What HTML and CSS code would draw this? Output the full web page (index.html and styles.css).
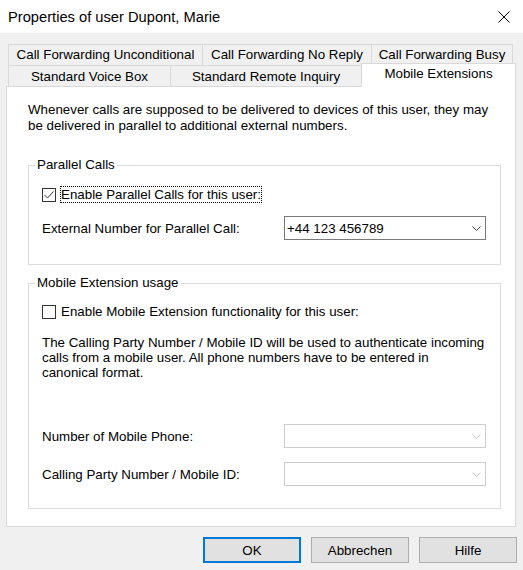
FILE: index.html
```html
<!DOCTYPE html>
<html lang="en">
<head>
    <meta charset="UTF-8">
    <meta name="viewport" content="width=device-width, initial-scale=1.0">
    <title>Properties of user Dupont, Marie</title>
    <link rel="stylesheet" href="styles.css">
</head>
<body>
    <div class="titlebar">
        <span class="title">Properties of user Dupont, Marie</span>
        <svg class="close" width="12" height="12" viewBox="0 0 12 12">
            <path d="M0.5 0.5 L11.5 11.5 M11.5 0.5 L0.5 11.5" stroke="#000" stroke-width="1" fill="none"/>
        </svg>
    </div>

    <div class="tabs">
        <div class="tab-row">
            <div class="tab tab-uncond">Call Forwarding Unconditional</div>
            <div class="tab tab-noreply">Call Forwarding No Reply</div>
            <div class="tab tab-busy">Call Forwarding Busy</div>
        </div>
        <div class="tab-row lower">
            <div class="tab tab-voicebox">Standard Voice Box</div>
            <div class="tab tab-remote">Standard Remote Inquiry</div>
            <div class="tab tab-mobile active">Mobile Extensions</div>
        </div>
    </div>

    <div class="panel">
        <p class="intro">Whenever calls are supposed to be delivered to devices of this user, they may<br>be delivered in parallel to additional external numbers.</p>

        <fieldset class="group group-parallel">
            <legend>Parallel Calls</legend>
            <div class="check-row">
                <span class="checkbox">
                    <svg width="12" height="12" viewBox="0 0 12 12">
                        <path d="M1.5 6 L4.5 9 L10.5 2.5" stroke="#333" stroke-width="1" fill="none"/>
                    </svg>
                </span>
                <span class="check-label focused">Enable Parallel Calls for this user:</span>
            </div>
            <div class="field-row">
                <span>External Number for Parallel Call:</span>
                <div class="combo">
                    <span>+44 123 456789</span>
                    <svg width="9" height="5" viewBox="0 0 9 5">
                        <path d="M0.5 0.5 L4.5 4.5 L8.5 0.5" stroke="#444" stroke-width="1" fill="none"/>
                    </svg>
                </div>
            </div>
        </fieldset>

        <fieldset class="group group-mobile">
            <legend>Mobile Extension usage</legend>
            <div class="check-row">
                <span class="checkbox"></span>
                <span class="check-label">Enable Mobile Extension functionality for this user:</span>
            </div>
            <p class="note">The Calling Party Number / Mobile ID will be used to authenticate incoming<br>calls from a mobile user. All phone numbers have to be entered in<br>canonical format.</p>
            <div class="field-row mobile-first">
                <span>Number of Mobile Phone:</span>
                <div class="combo disabled">
                    <span></span>
                    <svg width="9" height="5" viewBox="0 0 9 5">
                        <path d="M0.5 0.5 L4.5 4.5 L8.5 0.5" stroke="#c4c4c4" stroke-width="1" fill="none"/>
                    </svg>
                </div>
            </div>
            <div class="field-row mobile-next">
                <span>Calling Party Number / Mobile ID:</span>
                <div class="combo disabled">
                    <span></span>
                    <svg width="9" height="5" viewBox="0 0 9 5">
                        <path d="M0.5 0.5 L4.5 4.5 L8.5 0.5" stroke="#c4c4c4" stroke-width="1" fill="none"/>
                    </svg>
                </div>
            </div>
        </fieldset>
    </div>

    <div class="buttons">
        <button class="btn default">OK</button>
        <button class="btn">Abbrechen</button>
        <button class="btn">Hilfe</button>
    </div>
</body>
</html>
```

FILE: styles.css
```css
* {
    box-sizing: border-box;
}

body {
    margin: 0;
    width: 523px;
    height: 570px;
    overflow: hidden;
    background: #f0f0f0;
    font-family: "Liberation Sans", Arial, sans-serif;
    font-size: 13.33px;
    color: #000;
}

.titlebar {
    height: 33px;
    background: #fff;
    display: flex;
    align-items: center;
    justify-content: space-between;
    padding: 0 13px 0 8px;
}

.title {
    font-size: 14.7px;
}

/* tabs */

.tabs {
    padding: 11px 0 0 8px;
}

.tab-row {
    display: flex;
    align-items: flex-start;
}

.tab {
    height: 21px;
    margin-left: -1px;
    border: 1px solid #d9d9d9;
    border-bottom: none;
    background: #f0f0f0;
    text-align: center;
    line-height: 20px;
    white-space: nowrap;
}

.tab:first-child {
    margin-left: 0;
}

.lower .tab {
    line-height: 21px;
}

.tab-uncond { width: 195px; }
.tab-noreply { width: 170px; }
.tab-busy { width: 142px; }
.tab-voicebox { width: 163px; }
.tab-remote { width: 192px; }
.tab-mobile { width: 155px; }

.lower .tab.active {
    position: relative;
    z-index: 1;
    height: 24px;
    margin-top: -2px;
    margin-bottom: -1px;
    background: #fff;
    line-height: 20px;
}

/* panel */

.panel {
    margin-left: 6px;
    width: 510px;
    background: #fff;
    border: 1px solid #d9d9d9;
    padding: 15px 14px 17px 21px;
}

.intro {
    margin: 0;
    line-height: 16px;
}

.group {
    margin: 23px 0 0;
    padding: 0 14px 24px 13px;
    border: 1px solid #dcdcdc;
    min-width: 0;
}

.group legend {
    padding: 0 2px;
    margin-left: -7px;
    line-height: 16px;
}

.group-mobile {
    margin-top: 10px;
    padding-bottom: 22px;
}

.check-row {
    display: flex;
    align-items: center;
    height: 17px;
    margin-top: 13px;
}

.group-mobile .check-row {
    margin-top: 12px;
}

.checkbox {
    width: 14px;
    height: 14px;
    margin-right: 4px;
    border: 1px solid #333;
    background: #fff;
    display: flex;
}

.check-label {
    border: 1px dotted transparent;
    line-height: 15px;
}

.check-label.focused {
    border-color: #000;
}

.field-row {
    display: flex;
    align-items: center;
    justify-content: space-between;
    margin-top: 13px;
}

.combo {
    width: 202px;
    height: 24px;
    border: 1px solid #7a7a7a;
    background: #fff;
    display: flex;
    align-items: center;
    justify-content: space-between;
    padding: 0 4px 0 2px;
}

.combo.disabled {
    border-color: #cccccc;
}

.note {
    margin: 15px 0 0;
    line-height: 15px;
}

.mobile-first {
    margin-top: 44px;
}

.mobile-next {
    margin-top: 14px;
}

/* buttons */

.buttons {
    display: flex;
    justify-content: flex-end;
    gap: 10px;
    padding: 10px 6px 0 0;
}

.btn {
    width: 98px;
    height: 26px;
    border: 1px solid #adadad;
    background: #e1e1e1;
    font-family: inherit;
    font-size: 13.33px;
    color: #000;
    padding: 0;
}

.btn.default {
    border: 2px solid #0078d7;
}
```
